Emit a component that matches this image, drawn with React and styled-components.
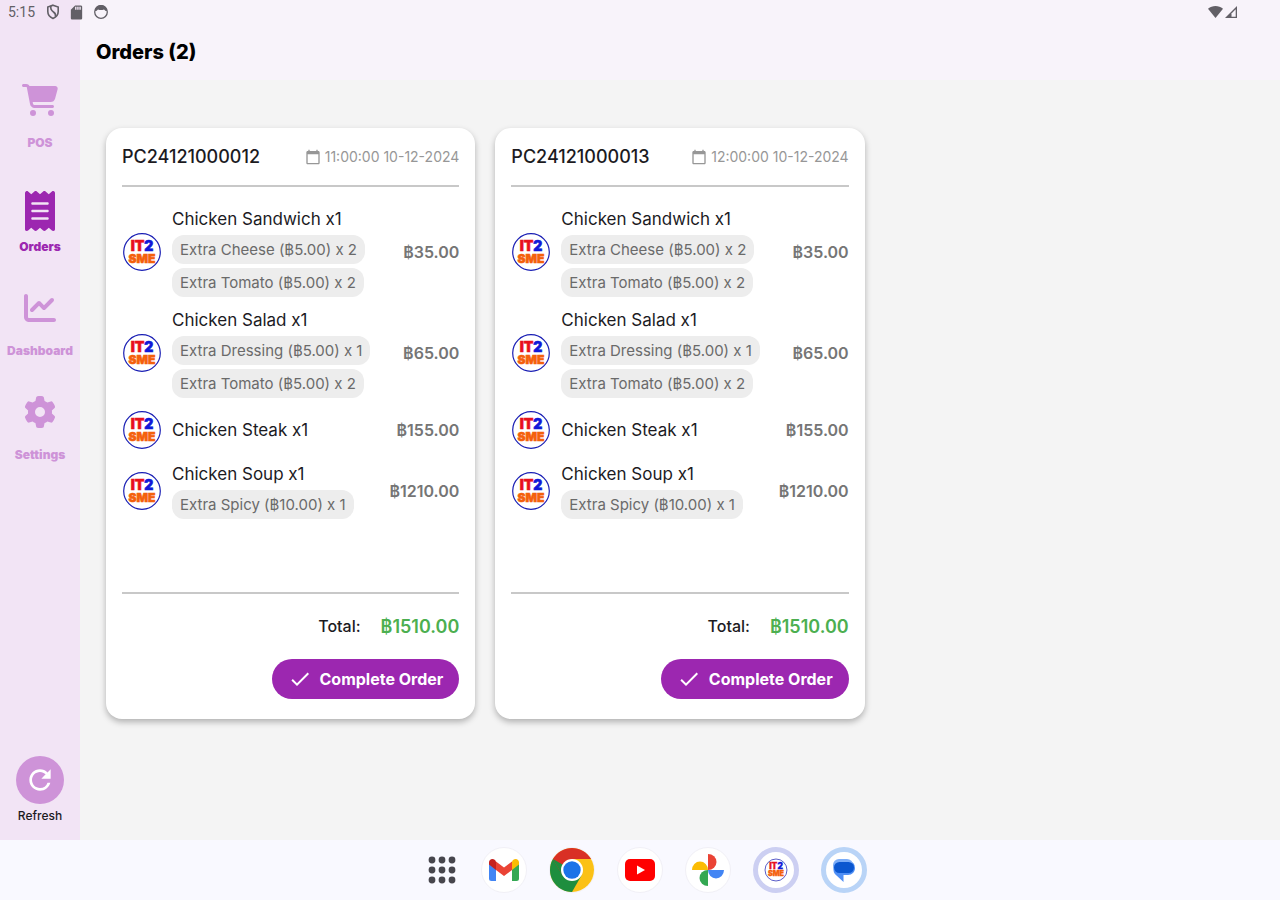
import React from 'react';
import styled, { createGlobalStyle } from 'styled-components';
import { FaCartShopping, FaChartLine, FaGear, FaReceipt } from 'react-icons/fa6';
import { MdCalendarToday, MdCheck, MdRefresh, MdSdCard } from 'react-icons/md';

const navItems = [
  { label: 'POS', icon: FaCartShopping, size: 36 },
  { label: 'Orders', icon: FaReceipt, size: 40, active: true },
  { label: 'Dashboard', icon: FaChartLine, size: 32 },
  { label: 'Settings', icon: FaGear, size: 32 },
];

const items = [
  {
    name: 'Chicken Sandwich x1',
    price: '฿35.00',
    extras: ['Extra Cheese (฿5.00) x 2', 'Extra Tomato (฿5.00) x 2'],
  },
  {
    name: 'Chicken Salad x1',
    price: '฿65.00',
    extras: ['Extra Dressing (฿5.00) x 1', 'Extra Tomato (฿5.00) x 2'],
  },
  { name: 'Chicken Steak x1', price: '฿155.00', extras: [] },
  { name: 'Chicken Soup x1', price: '฿1210.00', extras: ['Extra Spicy (฿10.00) x 1'] },
];

const orders = [
  { id: 'PC24121000012', date: '11:00:00 10-12-2024', total: '฿1510.00', items },
  { id: 'PC24121000013', date: '12:00:00 10-12-2024', total: '฿1510.00', items },
];

const Brand = ({ size }) => (
  <svg width={size} height={size} viewBox='0 0 40 40' aria-hidden='true'>
    <circle cx='20' cy='20' r='18.3' fill='#fff' stroke='#1a1fb4' strokeWidth='1.2' />
    <g fontFamily='Inter, sans-serif' fontWeight='900' textAnchor='middle' strokeWidth='0.6'>
      <text x='20' y='18.8' fontSize='14' fill='#e8101c' stroke='#e8101c'>
        IT
        <tspan fill='#1018d8' stroke='#1018d8'>
          2
        </tspan>
      </text>
      <text x='20' y='30.5' fontSize='12' fill='#f4600c' stroke='#f4600c'>
        SME
      </text>
    </g>
  </svg>
);

const StatusIcons = () => (
  <>
    <svg width='14' height='16' viewBox='0 0 14 16' fill='none' stroke='#625f66' strokeWidth='1.6'>
      <path d='M7 1.2 12.2 3v4.6c0 3.2-2 5.6-5.2 6.9-3.200-1.300-5.200-3.700-5.200-6.900V3z' />
      <path d='M5 2C4 5 5.500 6.500 7.500 8c2 1.400 2.300 2.800 2 4.500' />
    </svg>
    <MdSdCard size={17} color='#625f66' />
    <svg width='16' height='16' viewBox='0 0 16 16'>
      <circle cx='8' cy='8' r='6.300' fill='none' stroke='#625f66' strokeWidth='1.300' />
      <path d='M2 7c0-8 12-8 12 0-1.500.3-2-.5-3-1.500-2 .8-4 .8-6 0C4 6.500 3.500 7.300 2 7z' fill='#625f66' />
    </svg>
  </>
);

const SignalIcons = () => (
  <svg width='30' height='14' viewBox='0 0 30 14' aria-hidden='true'>
    <path d='M0 3.800C4.400.2 10.600.2 15 3.800L7.500 13z' fill='#625f66' />
    <path d='M17 13 29 1v12z' fill='#625f66' />
    <path d='M23.500 8.500 27.700 4.300v7.400h-4.200z' fill='#f8f3fa' />
  </svg>
);

const AppsIcon = () => (
  <svg width='28' height='28' viewBox='0 0 28 28' fill='#47464d'>
    {[4, 14, 24].map((y) => [4, 14, 24].map((x) => <circle key={`${x}-${y}`} cx={x} cy={y} r='3.400' />))}
  </svg>
);

const GmailIcon = () => (
  <svg width='32' height='24' viewBox='0 0 32 24'>
    <path d='M1 4v16.500A2.500 2.500 0 0 0 3.500 23H8V9z' fill='#4285f4' />
    <path d='M31 4v16.500a2.500 2.500 0 0 1-2.500 2.500H24V9z' fill='#34a853' />
    <path d='M8 3.500 16 9.500 24 3.500V12l-8 6-8-6z' fill='#ea4335' />
    <path d='M1 4.500C1 1.200 4.500 0 7 2l1 1.500V12L1 6.500z' fill='#c5221f' />
    <path d='M31 4.500C31 1.200 27.500 0 25 2l-1 1.500V12l7-5.500z' fill='#fbbc04' />
  </svg>
);

const ChromeIcon = () => (
  <svg width='44' height='44' viewBox='0 0 44 44'>
    <circle cx='22' cy='22' r='22' fill='#fbc116' />
    <path d='M22 22 2.950 11A22 22 0 0 0 22 44l9.500-16.500z' fill='#1e8e3e' />
    <path d='M22 22 12.500 27.500 2.950 11A22 22 0 0 1 41.050 11H22z' fill='#d93025' />
    <path d='M2.950 11 12.500 27.500 22 22z' fill='#1e8e3e' />
    <circle cx='22' cy='22' r='11' fill='#fff' />
    <circle cx='22' cy='22' r='8.700' fill='#1a73e8' />
  </svg>
);

const YoutubeIcon = () => (
  <svg width='32' height='22' viewBox='0 0 32 22'>
    <rect x='1' width='30' height='22' rx='5' fill='#f00' />
    <path d='M13 6.500v9l8-4.500z' fill='#fff' />
  </svg>
);

const PhotosIcon = () => (
  <svg width='32' height='32' viewBox='0 0 32 32'>
    <path d='M16 0a8.500 8 0 0 1 0 16z' fill='#ea4335' />
    <path d='M32 16a8 8.500 0 0 1-16 0z' fill='#4285f4' />
    <path d='M16 32a8.500 8 0 0 1 0-16z' fill='#34a853' />
    <path d='M0 16a8 8.500 0 0 1 16 0z' fill='#fbbc04' />
  </svg>
);

const MessagesIcon = () => (
  <svg width='24' height='24' viewBox='0 0 24 24'>
    <path d='M8 3h9a6.500 6.500 0 0 1 6 7c0 4-3 7-7 7h-4.500v7L4.500 17.500C2 16 1 13 1.500 9z' fill='#4f8ff5' />
    <rect x='1' y='1' width='20' height='13' rx='6' fill='#7badf8' />
    <rect x='2' y='4' width='20' height='11' rx='5.500' fill='#0b57d0' />
  </svg>
);

const dockApps = [
  { name: 'Gmail', icon: <GmailIcon /> },
  { name: 'Chrome', icon: <ChromeIcon /> },
  { name: 'YouTube', icon: <YoutubeIcon /> },
  { name: 'Photos', icon: <PhotosIcon /> },
  { name: 'IT2SME', icon: <Brand size={24} />, ring: '#cccff2' },
  { name: 'Messages', icon: <MessagesIcon />, ring: '#b9d4f7' },
];

const OrderCard = ({ order }) => (
  <Card>
    <CardHeader>
      <OrderId>{order.id}</OrderId>
      <OrderDate>
        <MdCalendarToday size={16} />
        {order.date}
      </OrderDate>
    </CardHeader>
    <ItemList>
      {order.items.map((item) => (
        <Item key={item.name}>
          <Brand size={40} />
          <ItemBody>
            <ItemName>{item.name}</ItemName>
            {item.extras.map((extra) => (
              <Extra key={extra}>{extra}</Extra>
            ))}
          </ItemBody>
          <Price>{item.price}</Price>
        </Item>
      ))}
    </ItemList>
    <CardFooter>
      <Total>
        Total: <TotalValue>{order.total}</TotalValue>
      </Total>
      <CompleteButton type='button'>
        <MdCheck size={24} />
        Complete Order
      </CompleteButton>
    </CardFooter>
  </Card>
);

const App = () => (
  <>
    <GlobalStyle />
    <Screen>
      <StatusBar>
        <StatusGroup>
          <Clock>5:15</Clock>
          <StatusIcons />
        </StatusGroup>
        <SignalIcons />
      </StatusBar>
      <Workspace>
        <Sidebar>
          <Nav>
            {navItems.map(({ label, icon: Icon, size, active }) => (
              <NavLink key={label} href='#' $active={active}>
                <NavIcon $active={active}>
                  <Icon size={size} />
                </NavIcon>
                {label}
              </NavLink>
            ))}
          </Nav>
          <Refresh type='button'>
            <RefreshCircle>
              <MdRefresh size={32} />
            </RefreshCircle>
            Refresh
          </Refresh>
        </Sidebar>
        <Main>
          <Header>
            <Title>Orders (2)</Title>
          </Header>
          <OrderGrid>
            {orders.map((order) => (
              <OrderCard key={order.id} order={order} />
            ))}
          </OrderGrid>
        </Main>
      </Workspace>
      <Dock>
        <AppsButton type='button' aria-label='All apps'>
          <AppsIcon />
        </AppsButton>
        {dockApps.map(({ name, icon, ring }) => (
          <DockButton key={name} type='button' aria-label={name} $ring={ring}>
            {icon}
          </DockButton>
        ))}
      </Dock>
    </Screen>
  </>
);

export default App;

const GlobalStyle = createGlobalStyle`
  * {
    box-sizing: border-box;
  }
  body {
    margin: 0;
    background: #f4f4f4;
    color: #1c1b1f;
    font-family: Inter, 'Noto Sans', sans-serif;
    font-size: 16px;
  }
  button {
    border: none;
    padding: 0;
    background: none;
    font-family: inherit;
    cursor: pointer;
  }
  svg {
    flex-shrink: 0;
  }
`;

const Screen = styled.div`
  position: relative;
  display: flex;
  flex-direction: column;
  min-height: 100vh;
`;

/* system bar floats over the sidebar and the header */
const StatusBar = styled.div`
  position: absolute;
  top: 0;
  left: 0;
  right: 0;
  display: flex;
  align-items: center;
  justify-content: space-between;
  height: 24px;
  padding: 0 42px 0 8px;
`;

const StatusGroup = styled.div`
  display: flex;
  align-items: center;
  gap: 8px;
`;

const Clock = styled.span`
  margin-right: 3px;
  font-family: Roboto, sans-serif;
  font-size: 14px;
  color: #625f66;
`;

const Workspace = styled.div`
  display: flex;
  flex: 1;
`;

const Sidebar = styled.aside`
  display: flex;
  flex-direction: column;
  justify-content: space-between;
  width: 80px;
  padding: 80px 0 16px;
  background: #f2e4f5;
`;

const Nav = styled.nav`
  display: flex;
  flex-direction: column;
`;

const NavLink = styled.a`
  display: flex;
  flex-direction: column;
  align-items: center;
  height: 104px;
  font-size: 12px;
  line-height: 20px;
  font-weight: 900;
  text-decoration: none;
  color: ${({ $active }) => ($active ? '#9c27b0' : '#ce93d8')};
`;

const NavIcon = styled.span`
  display: flex;
  align-items: center;
  height: 53px;
  padding-top: ${({ $active }) => ($active ? '1px' : '0')};
  padding-bottom: ${({ $active }) => ($active ? '0' : '13px')};
`;

const Refresh = styled.button`
  display: flex;
  flex-direction: column;
  align-items: center;
  gap: 4px;
  font-size: 12px;
  line-height: 16px;
  font-weight: 500;
  color: #1c1b1f;
`;

const RefreshCircle = styled.span`
  display: flex;
  align-items: center;
  justify-content: center;
  width: 48px;
  height: 48px;
  border-radius: 50%;
  background: #ce93d8;
  color: #fff;
`;

const Main = styled.main`
  flex: 1;
  min-width: 0;
`;

const Header = styled.header`
  height: 80px;
  padding: 38px 16px 0;
  background: #f8f3fa;
`;

const Title = styled.h1`
  margin: 0;
  font-size: 20px;
  line-height: 28px;
  font-weight: 800;
  color: #000;
`;

const OrderGrid = styled.div`
  display: grid;
  grid-template-columns: repeat(3, minmax(0, 1fr));
  gap: 20px;
  padding: 48px 26px;
`;

const Card = styled.article`
  padding: 0 16px 20px;
  border-radius: 16px;
  background: #fff;
  box-shadow: 0 3px 6px rgba(0, 0, 0, 0.28);
`;

const CardHeader = styled.div`
  display: flex;
  align-items: center;
  justify-content: space-between;
  height: 59px;
  border-bottom: 2px solid #c8c8c8;
`;

const OrderId = styled.h2`
  margin: 0;
  font-size: 18px;
  font-weight: 500;
`;

const OrderDate = styled.span`
  display: flex;
  align-items: center;
  gap: 4px;
  font-size: 14px;
  color: #979797;
`;

const ItemList = styled.ul`
  display: flex;
  flex-direction: column;
  gap: 11px;
  min-height: 407px;
  margin: 0;
  padding: 20px 0;
  list-style: none;
  border-bottom: 2px solid #c8c8c8;
`;

const Item = styled.li`
  display: flex;
  align-items: center;
  gap: 10px;
  min-height: 42px;
`;

const ItemBody = styled.div`
  display: flex;
  flex-direction: column;
  align-items: flex-start;
  gap: 4px;
  flex: 1;
`;

const ItemName = styled.span`
  font-size: 17px;
  line-height: 24px;
`;

const Extra = styled.span`
  padding: 0 8px;
  border-radius: 12px;
  background: #ededed;
  font-size: 15px;
  line-height: 29px;
  color: #6a6a6a;
  white-space: nowrap;
`;

const Price = styled.span`
  font-weight: 600;
  color: #757575;
`;

const CardFooter = styled.div`
  display: flex;
  flex-direction: column;
  align-items: flex-end;
  gap: 20px;
  padding-top: 20px;
`;

const Total = styled.div`
  display: flex;
  align-items: center;
  gap: 20px;
  line-height: 25px;
  font-weight: 500;
`;

const TotalValue = styled.span`
  font-size: 18px;
  font-weight: 600;
  color: #4caf50;
`;

const CompleteButton = styled.button`
  display: flex;
  align-items: center;
  gap: 8px;
  height: 40px;
  padding: 0 16px;
  border-radius: 20px;
  background: #9c27b0;
  color: #fff;
  font-size: 16px;
  font-weight: 700;
`;

const Dock = styled.footer`
  display: flex;
  align-items: center;
  justify-content: center;
  gap: 22px;
  height: 60px;
  padding-left: 12px;
  background: #f9f9ff;
`;

const AppsButton = styled.button`
  display: flex;
  justify-content: center;
  width: 34px;
`;

const DockButton = styled.button`
  display: flex;
  align-items: center;
  justify-content: center;
  width: 46px;
  height: 46px;
  border: ${({ $ring }) => ($ring ? `5px solid ${$ring}` : '1px solid #f1f0f6')};
  border-radius: 50%;
  background: #fff;
`;
